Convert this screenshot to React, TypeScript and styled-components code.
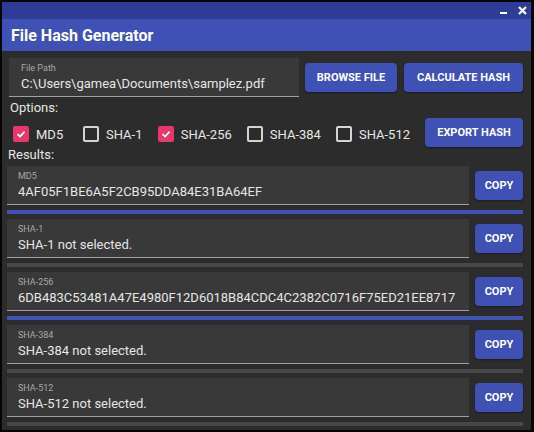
import React from 'react';
import styled, {createGlobalStyle} from "styled-components";

const GlobalStyle = createGlobalStyle`
    body {
        margin: 0;
        background: #000;
        font-family: Roboto, "Liberation Sans", sans-serif;
    }
    * {
        box-sizing: border-box;
    }
`

const options = [
    {name: "MD5", checked: true},
    {name: "SHA-1", checked: false},
    {name: "SHA-256", checked: true},
    {name: "SHA-384", checked: false},
    {name: "SHA-512", checked: false},
];

const results = [
    {name: "MD5", value: "4AF05F1BE6A5F2CB95DDA84E31BA64EF", done: true},
    {name: "SHA-1", value: "SHA-1 not selected.", done: false},
    {name: "SHA-256", value: "6DB483C53481A47E4980F12D6018B84CDC4C2382C0716F75ED21EE8717", done: true},
    {name: "SHA-384", value: "SHA-384 not selected.", done: false},
    {name: "SHA-512", value: "SHA-512 not selected.", done: false},
];

export default function App() {
    return (
        <>
            <GlobalStyle/>
            <Window>
                <TitleBar>
                    <WinButton>
                        <svg width="9" height="9" viewBox="0 0 9 9">
                            <rect x="1" y="6" width="7" height="2" fill="#fff"/>
                        </svg>
                    </WinButton>
                    <WinButton>
                        <svg width="9" height="9" viewBox="0 0 9 9">
                            <path d="M1 1 L8 8 M8 1 L1 8" stroke="#fff" strokeWidth="2.2"/>
                        </svg>
                    </WinButton>
                </TitleBar>
                <AppBar>File Hash Generator</AppBar>
                <Content>
                    <TopRow>
                        <PathField>
                            <FieldLabel>File Path</FieldLabel>
                            <PathValue>C:\Users\gamea\Documents\samplez.pdf</PathValue>
                        </PathField>
                        <Button width={92}>BROWSE FILE</Button>
                        <Button width={119}>CALCULATE HASH</Button>
                    </TopRow>
                    <SectionLabel indent={3}>Options:</SectionLabel>
                    <OptionsRow>
                        {options.map(o => (
                            <Option key={o.name}>
                                <Box checked={o.checked}>
                                    {o.checked && (
                                        <svg width="12" height="12" viewBox="0 0 12 12">
                                            <path d="M2.5 6.2 L5 8.6 L9.6 3.6" stroke="#fff" strokeWidth="1.6" fill="none"/>
                                        </svg>
                                    )}
                                </Box>
                                <OptionText>{o.name}</OptionText>
                            </Option>
                        ))}
                        <ExportSlot>
                            <Button width={98}>EXPORT HASH</Button>
                        </ExportSlot>
                    </OptionsRow>
                    <ResultsLabel>Results:</ResultsLabel>
                    <ResultList>
                        {results.map(r => (
                            <ResultBlock key={r.name}>
                                <ResultRow>
                                    <ResultField>
                                        <FieldLabel>{r.name}</FieldLabel>
                                        <ResultValue>{r.value}</ResultValue>
                                    </ResultField>
                                    <Button width={48}>COPY</Button>
                                </ResultRow>
                                <Progress done={r.done}/>
                            </ResultBlock>
                        ))}
                    </ResultList>
                </Content>
            </Window>
        </>
    );
}

const Window = styled.div`
    width: 534px;
    height: 432px;
    border: 2px solid #050505;
    border-right-width: 3px;
    background-color: #2c2c2c;
    display: flex;
    flex-direction: column;
    overflow: hidden;
`

const TitleBar = styled.div`
    height: 17px;
    flex-shrink: 0;
    background-color: #2e3b97;
    display: flex;
    justify-content: flex-end;
    align-items: center;
    gap: 10px;
    padding-right: 4px;
`

const WinButton = styled.span`
    display: flex;
    width: 9px;
    height: 9px;
`

const AppBar = styled.div`
    height: 32px;
    flex-shrink: 0;
    background-color: #3f51b5;
    color: #fff;
    font-size: 16px;
    font-weight: 700;
    display: flex;
    align-items: center;
    padding-left: 9px;
`

const Content = styled.div`
    flex: 1;
    padding: 7px 8px 0 5px;
    display: flex;
    flex-direction: column;
`

const TopRow = styled.div`
    display: flex;
    align-items: center;
    gap: 7px;
    margin-left: 2px;
`

const PathField = styled.div`
    width: 290px;
    height: 39px;
    flex-shrink: 0;
    background-color: #393939;
    border-bottom: 1px solid #a0a0a0;
    padding: 5px 0 0 12px;
    margin-right: -1px;
`

const FieldLabel = styled.div`
    font-size: 9px;
    line-height: 11px;
    color: #a8a8a8;
`

const PathValue = styled.div`
    font-size: 13px;
    line-height: 17px;
    margin-top: 1px;
    color: #e6e6e6;
    white-space: nowrap;
`

const Button = styled.button<{width: number}>`
    width: ${p => p.width}px;
    height: 29px;
    flex-shrink: 0;
    border: none;
    border-radius: 4px;
    background-color: #3f51b5;
    color: #fff;
    font-family: Roboto, "Liberation Sans", sans-serif;
    font-size: 11px;
    font-weight: 700;
    padding: 0;
    white-space: nowrap;
    box-shadow: 0 1px 2px rgba(0, 0, 0, 0.4);
`

const SectionLabel = styled.div<{indent: number}>`
    font-size: 13px;
    line-height: 16px;
    color: #e6e6e6;
    padding-left: ${p => p.indent}px;
    margin-top: 3px;
`

const ResultsLabel = styled.div`
    font-size: 13px;
    line-height: 14px;
    color: #e6e6e6;
    padding-left: 1px;
`

const OptionsRow = styled.div`
    display: flex;
    align-items: center;
    height: 31px;
    margin-top: 1px;
    padding-left: 6px;
`

const Option = styled.label`
    display: flex;
    align-items: center;
    gap: 7px;
    min-width: 54px;
    margin-right: 16px;
    margin-top: 3px;
`

const ExportSlot = styled.div`
    margin-left: auto;
    display: flex;
`

const Box = styled.span<{checked: boolean}>`
    width: 16px;
    height: 16px;
    flex-shrink: 0;
    border-radius: 2px;
    display: flex;
    align-items: center;
    justify-content: center;
    background-color: ${p => p.checked ? "#e8376f" : "transparent"};
    border: ${p => p.checked ? "none" : "2px solid #d4d4d4"};
`

const OptionText = styled.span`
    font-size: 13px;
    color: #e6e6e6;
    white-space: nowrap;
`

const ResultList = styled.div`
    margin-top: 4px;
    display: flex;
    flex-direction: column;
    gap: 5px;
`

const ResultBlock = styled.div`
    display: flex;
    flex-direction: column;
    gap: 5px;
`

const ResultRow = styled.div`
    display: flex;
    align-items: center;
    gap: 6px;
`

const ResultField = styled.div`
    flex: 1;
    min-width: 0;
    height: 39px;
    background-color: #393939;
    border-bottom: 1px solid #a0a0a0;
    padding: 5px 0 0 11px;
`

const ResultValue = styled.div`
    font-size: 13px;
    line-height: 17px;
    margin-top: 1px;
    color: #e6e6e6;
    white-space: nowrap;
    overflow: hidden;
`

const Progress = styled.div<{done: boolean}>`
    height: 4px;
    background-color: ${p => p.done ? "#3f51b5" : "#474747"};
`
